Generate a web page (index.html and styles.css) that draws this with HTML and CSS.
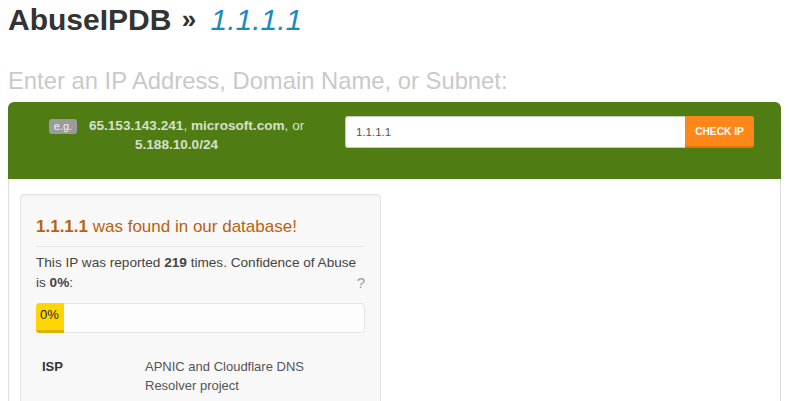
FILE: index.html
```html
<!DOCTYPE html>
<html lang="en">
<head>
<meta charset="utf-8">
<title>AbuseIPDB » 1.1.1.1</title>
<link rel="stylesheet" href="styles.css">
</head>
<body>
<h1 class="title">AbuseIPDB <span class="raquo">»</span> <span class="ip">1.1.1.1</span></h1>
<h2 class="prompt">Enter an IP Address, Domain Name, or Subnet:</h2>
<div class="panel">
  <div class="panel-head">
    <div class="examples"><span class="badge">e.g.</span> <b>65.153.143.241</b>, <b>microsoft.com</b>, or <b>5.188.10.0/24</b></div>
    <form class="search">
      <input class="search-input" type="text" value="1.1.1.1">
      <button class="search-btn" type="button">CHECK IP</button>
    </form>
  </div>
  <div class="panel-body">
    <div class="well">
      <h3 class="found"><b>1.1.1.1</b> was found in our database!</h3>
      <hr class="rule">
      <p class="report">This IP was reported <b>219</b> times. Confidence of Abuse is <b>0%</b>: <span class="help">?</span></p>
      <div class="progress"><div class="bar" style="width:28px">0%</div></div>
      <table class="info">
        <tr><th class="info-label">ISP</th><td class="info-value">APNIC and Cloudflare DNS Resolver project</td></tr>
      </table>
    </div>
  </div>
</div>
</body>
</html>
```
FILE: styles.css
```css
html, body {
  background: #fff;
}
body {
  margin: 0 8px;
  font-family: "Liberation Sans", Arial, Helvetica, sans-serif;
  color: #333;
}
.title {
  margin: 0;
  padding-top: 2px;
  font-size: 30px;
  line-height: 34px;
  font-weight: bold;
  color: #333;
  white-space: nowrap;
}
.raquo {
  font-size: 26px;
  vertical-align: 2px;
  margin: 0 6px 0 2px;
}
.ip {
  font-style: italic;
  font-weight: normal;
  color: #1a8ac2;
}
.prompt {
  margin: 30px 0 7px;
  font-size: 23.8px;
  line-height: 28px;
  font-weight: normal;
  color: #c9c9c9;
}
.panel-head {
  display: flex;
  align-items: flex-start;
  background: #4f7d14;
  border-radius: 6px 6px 0 0;
  padding: 14px 27px 0 0;
  height: 77px;
  box-sizing: border-box;
}
.examples {
  flex: none;
  width: 337px;
  box-sizing: border-box;
  padding: 0 15px;
  text-align: center;
  font-size: 13.6px;
  line-height: 19px;
  color: #d6e0ca;
}
.badge {
  display: inline-block;
  background: #9b9b9b;
  color: #f2f2f2;
  font-size: 11px;
  line-height: 13px;
  padding: 1px 5px;
  border-radius: 3px;
  margin-right: 8px;
}
.search {
  display: flex;
  flex: 1;
  margin: 0;
}
.search-input {
  flex: 1;
  min-width: 0;
  height: 32px;
  box-sizing: border-box;
  margin: 0;
  padding: 0 10px;
  border: 1px solid #c4cfb5;
  border-right: 0;
  border-radius: 3px 0 0 3px;
  background: #fff;
  color: #555;
  font-family: "Liberation Sans", Arial, sans-serif;
  font-size: 11.5px;
  outline: none;
}
.search-btn {
  flex: none;
  width: 69px;
  height: 32px;
  box-sizing: border-box;
  margin: 0;
  padding: 0;
  border: 0;
  border-bottom: 2px solid #e87400;
  border-radius: 0 3px 3px 0;
  background: #ff8618;
  color: #fff;
  font-family: "Liberation Sans", Arial, sans-serif;
  font-size: 10.2px;
  font-weight: bold;
}
.panel-body {
  border: 1px solid #dedede;
  border-top: 0;
  padding: 15px 11px;
  min-height: 300px;
}
.well {
  width: 361px;
  box-sizing: border-box;
  background: #f8f8f8;
  border: 1px solid #e4e4e4;
  border-radius: 4px;
  box-shadow: inset 0 1px 1px rgba(0, 0, 0, 0.05);
  padding: 22px 15px 15px;
}
.found {
  margin: 0;
  font-size: 17px;
  line-height: 20px;
  font-weight: normal;
  color: #b9620e;
}
.rule {
  border: 0;
  border-top: 1px solid #e8e8e8;
  margin: 9px 0 6px;
}
.report {
  margin: 0;
  font-size: 13.6px;
  line-height: 20px;
  color: #444;
}
.help {
  float: right;
  color: #9a9a9a;
  font-size: 15px;
}
.progress {
  margin-top: 10px;
  height: 30px;
  background: #fdfdfd;
  border-radius: 4px;
  box-shadow: inset 0 0 0 1px #e4e4e4;
  overflow: hidden;
}
.bar {
  height: 100%;
  box-sizing: border-box;
  background: #ffd600;
  border-bottom: 3px solid #d8b400;
  padding-left: 4px;
  font-size: 13px;
  line-height: 24px;
  color: #222;
  white-space: nowrap;
}
.info {
  margin-top: 16px;
  width: 100%;
  table-layout: fixed;
  border-collapse: collapse;
  font-size: 13px;
  line-height: 19px;
  color: #555;
}
.info-label {
  width: 91px;
  padding: 8px 6px;
  text-align: left;
  vertical-align: top;
  color: #333;
}
.info-value {
  padding: 8px 10px 8px 6px;
  vertical-align: top;
}
```
